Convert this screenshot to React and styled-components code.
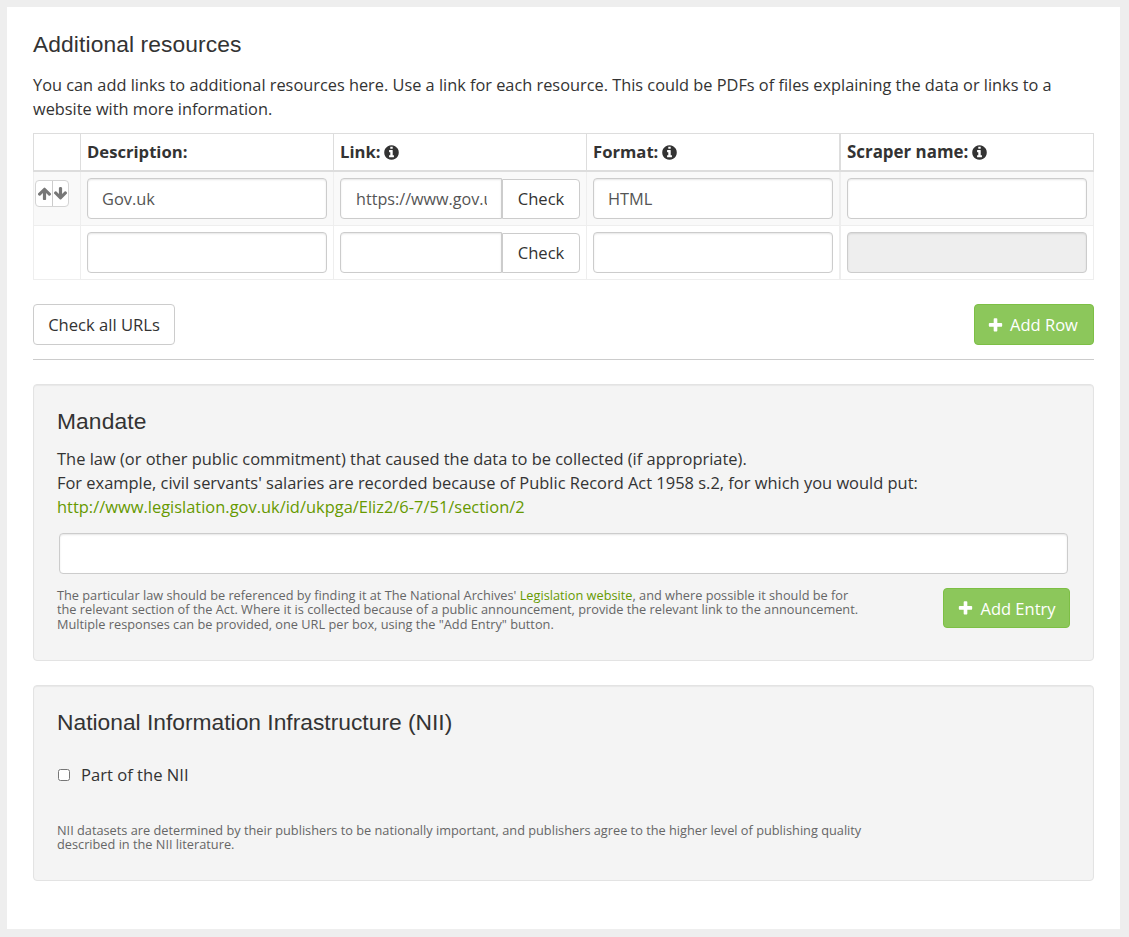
import React from "react";
import styled, { createGlobalStyle, css } from "styled-components";

const GlobalStyle = createGlobalStyle`
  *, *::before, *::after { box-sizing: border-box; }
  body {
    margin: 0;
    padding: 7px 9px 8px 7px;
    background: #eee;
    color: #333;
    font: 16.6px/24px "Open Sans", sans-serif;
  }
`;

const Page = styled.main`
  height: 922px;
  padding: 25px 26px 0;
  background: #fff;
`;

const Heading = styled.h3`
  margin: 0 0 ${(p) => p.$gap}px;
  font: 400 22.8px/24px "Liberation Sans", Arial, sans-serif;
  letter-spacing: ${(p) => p.$tracking || 0}px;
`;

const Text = styled.p`
  margin: 0 0 ${(p) => p.$gap || 12}px;
  font-size: ${(p) => p.$size || 16.44}px;
`;

const Link = styled.a`
  color: #690;
  text-decoration: none;
`;

const Icon = styled.svg`
  display: inline-block;
  width: ${(p) => p.$size}px;
  height: ${(p) => p.$size}px;
  flex: none;
  fill: currentColor;
`;

const Table = styled.div`
  display: grid;
  grid-template-columns: 47px 253px 253px 253px 255px;
`;

const HeadCell = styled.div`
  display: flex;
  align-items: center;
  gap: 3px;
  height: 39px;
  padding: 0 6px;
  border: solid #ddd;
  border-width: 1px ${(p) => (p.$last ? 1 : 0)}px 2px ${(p) => (p.$last ? 2 : 1)}px;
  font-size: ${(p) => (p.$last ? 16.9 : 16.65)}px;
  font-weight: 700;
`;

const Cell = styled.div`
  display: flex;
  height: 54px;
  padding: ${(p) => (p.$tight ? "8px 1px" : "6px")};
  border: solid #eee;
  border-width: 0 ${(p) => (p.$last ? 1 : 0)}px 1px ${(p) => (p.$last ? 2 : 1)}px;
  background: ${(p) => (p.$striped ? "#f9f9f9" : "#fff")};
`;

const Input = styled.input`
  width: 240px;
  min-width: 0;
  height: 41px;
  padding: 0 14px;
  border: 1px solid #ccc;
  border-radius: 4px;
  background: #fff;
  box-shadow: inset 0 1px 2px rgba(0, 0, 0, 0.1);
  color: #555;
  font: inherit;
  font-size: 16.4px;
  &:disabled { background: #eee; }
  ${(p) => p.$joined && css`
    width: 162px;
    padding: 0 14px 0 15px;
    border-radius: 4px 0 0 4px;
    font-size: 16.15px;
  `}
  ${(p) => p.$full && css`
    display: block;
    width: calc(100% - 4px);
    margin: 0 2px 14px;
  `}
`;

const Button = styled.button`
  display: inline-flex;
  align-items: center;
  justify-content: center;
  width: ${(p) => p.$width}px;
  height: ${(p) => p.$height || 41}px;
  padding: 0 ${(p) => p.$inset || 0}px 0 0;
  gap: 6px;
  flex: none;
  border: 1px solid #ccc;
  border-radius: 4px;
  background: #fff;
  color: #333;
  font: inherit;
  ${(p) => p.$primary && css`
    padding-top: 1px;
    border-color: #7dbf45;
    background: #8cc75b;
    color: #fff;
    font-size: 16.5px;
  `}
  ${(p) => p.$joined && css`
    margin-top: 1px;
    border-radius: 0 4px 4px 0;
  `}
`;

const SortGroup = styled.div`
  display: flex;
  height: 27px;
  border: 1px solid #d4d4d4;
  border-radius: 4px;
  background: #fff;
  color: #777;
`;

const SortButton = styled.button`
  display: flex;
  align-items: center;
  justify-content: center;
  width: 16px;
  padding: 0;
  border: 0;
  background: none;
  color: inherit;
  & + & { border-left: 1px solid #ccc; }
`;

const Actions = styled.div`
  display: flex;
  justify-content: space-between;
  margin-top: 24px;
  padding-bottom: 14px;
  border-bottom: 1px solid #ccc;
`;

const Well = styled.section`
  height: ${(p) => p.$height}px;
  margin-top: 24px;
  padding: 24px 23px 0;
  border: 1px solid #e3e3e3;
  border-radius: 4px;
  background: #f4f4f4;
  box-shadow: inset 0 1px 1px rgba(0, 0, 0, 0.05);
`;

const HelpRow = styled.div`
  display: flex;
  justify-content: space-between;
`;

const Help = styled.div`
  color: #666;
  font-size: 12.75px;
  line-height: 14.4px;
  white-space: nowrap;
`;

const CheckLabel = styled.label`
  display: flex;
  align-items: center;
  margin-bottom: 36px;
`;

const Checkbox = styled.input`
  width: 12px;
  height: 12px;
  margin: 0 11px 0 1px;
`;

const paths = {
  info: "M1152 1376v-160q0-14-9-23t-23-9h-96v-512q0-14-9-23t-23-9h-320q-14 0-23 9t-9 23v160q0 14 9 23t23 9h96v320h-96q-14 0-23 9t-9 23v160q0 14 9 23t23 9h448q14 0 23-9t9-23zm-128-896v-160q0-14-9-23t-23-9h-192q-14 0-23 9t-9 23v160q0 14 9 23t23 9h192q14 0 23-9t9-23zm640 416q0 209-103 385.5t-279.5 279.5-385.5 103-385.5-103-279.5-279.5-103-385.5 103-385.5 279.5-279.5 385.5-103 385.5 103 279.5 279.5 103 385.5z",
  plus: "M1600 736v192q0 40-28 68t-68 28h-416v416q0 40-28 68t-68 28h-192q-40 0-68-28t-28-68v-416h-416q-40 0-68-28t-28-68v-192q0-40 28-68t68-28h416v-416q0-40 28-68t68-28h192q40 0 68 28t28 68v416h416q40 0 68 28t28 68z",
  up: "M1675 971q0 51-37 90l-75 75q-38 38-91 38-54 0-90-38l-294-293v704q0 52-37.5 84.5t-90.5 32.5h-128q-53 0-90.5-32.5t-37.5-84.5v-704l-294 293q-36 38-90 38t-90-38l-75-75q-38-38-38-90 0-53 38-91l651-651q35-37 90-37 54 0 91 37l651 651q37 39 37 91z",
  down: "M1675 832q0 53-37 90l-651 652q-39 37-91 37-53 0-90-37l-651-652q-38-36-38-90 0-53 38-91l74-75q39-37 91-37 53 0 90 37l294 294v-704q0-52 38-90t90-38h128q52 0 90 38t38 90v704l294-294q37-37 90-37 52 0 91 37l75 75q37 39 37 91z",
};

function Glyph({ name, size = 17 }) {
  return (
    <Icon $size={size} viewBox="0 0 1792 1792" aria-hidden="true">
      <path d={paths[name]} />
    </Icon>
  );
}

function ResourceRow({ striped, sortable, description, link, format, locked }) {
  return (
    <>
      <Cell $striped={striped} $tight>
        {sortable && (
          <SortGroup>
            <SortButton aria-label="Move up"><Glyph name="up" size={15} /></SortButton>
            <SortButton aria-label="Move down"><Glyph name="down" size={15} /></SortButton>
          </SortGroup>
        )}
      </Cell>
      <Cell $striped={striped}><Input defaultValue={description} /></Cell>
      <Cell $striped={striped}>
        <Input $joined defaultValue={link} />
        <Button $joined $width={78} $height={40}>Check</Button>
      </Cell>
      <Cell $striped={striped}><Input defaultValue={format} /></Cell>
      <Cell $striped={striped} $last><Input disabled={locked} /></Cell>
    </>
  );
}

export default function App() {
  return (
    <>
      <GlobalStyle />
      <Page>
        <Heading $gap={17} $tracking={0.1}>Additional resources</Heading>
        <Text $size={16.33}>
          You can add links to additional resources here. Use a link for each resource. This could be PDFs of files explaining the data or links to a<br />
          website with more information.
        </Text>
        <Table>
          <HeadCell />
          <HeadCell>Description:</HeadCell>
          <HeadCell>Link: <Glyph name="info" /></HeadCell>
          <HeadCell>Format: <Glyph name="info" /></HeadCell>
          <HeadCell $last>Scraper name: <Glyph name="info" /></HeadCell>
          <ResourceRow striped sortable description="Gov.uk" link="https://www.gov.uk" format="HTML" />
          <ResourceRow locked />
        </Table>
        <Actions>
          <Button $width={142}>Check all URLs</Button>
          <Button $primary $width={120} $inset={3}><Glyph name="plus" />Add Row</Button>
        </Actions>
        <Well $height={277}>
          <Heading $gap={14} $tracking={0.1}>Mandate</Heading>
          <Text $gap={14}>
            The law (or other public commitment) that caused the data to be collected (if appropriate).<br />
            For example, civil servants' salaries are recorded because of Public Record Act 1958 s.2, for which you would put:<br />
            <Link>http://www.legislation.gov.uk/id/ukpga/Eliz2/6-7/51/section/2</Link>
          </Text>
          <Input $full />
          <HelpRow>
            <Help>
              The particular law should be referenced by finding it at The National Archives' <Link>Legislation website</Link>, and where possible it should be for<br />
              the relevant section of the Act. Where it is collected because of a public announcement, provide the relevant link to the announcement.<br />
              Multiple responses can be provided, one URL per box, using the "Add Entry" button.
            </Help>
            <Button $primary $width={127} $height={40}><Glyph name="plus" />Add Entry</Button>
          </HelpRow>
        </Well>
        <Well $height={196}>
          <Heading $gap={29}>National Information Infrastructure (NII)</Heading>
          <CheckLabel><Checkbox type="checkbox" />Part of the NII</CheckLabel>
          <Help>
            NII datasets are determined by their publishers to be nationally important, and publishers agree to the higher level of publishing quality<br />
            described in the NII literature.
          </Help>
        </Well>
      </Page>
    </>
  );
}
